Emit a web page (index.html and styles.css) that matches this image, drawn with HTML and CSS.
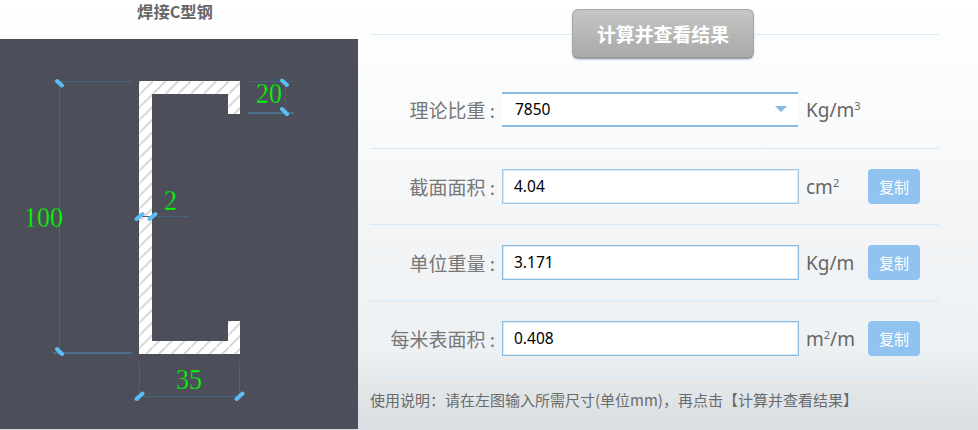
FILE: index.html
```html
<!DOCTYPE html>
<html lang="zh">
<head>
<meta charset="utf-8">
<title>焊接C型钢</title>
<link rel="stylesheet" href="styles.css">
</head>
<body>
<div class="page">
  <section class="figure">
    <h1 class="figure-title">焊接C型钢</h1>
    <div class="canvas">
      <svg class="drawing" width="358" height="390" viewBox="0 39 358 390" xmlns="http://www.w3.org/2000/svg">
        <defs>
          <pattern id="hatch" width="12.67" height="12.67" patternUnits="userSpaceOnUse" x="1" y="5">
            <rect width="12.67" height="12.67" fill="#fff"/>
            <line x1="0" y1="12.67" x2="12.67" y2="0" stroke="#cfcfcf" stroke-width="1.6"/>
          </pattern>
        </defs>
        <path class="steel" d="M139 81H240V114H228V94H152V341H228V321H240V354H139Z" fill="url(#hatch)"/>
        <g class="dim">
          <path d="M59.5 81V353M53 81.5H132M248 81.5H294M285.5 81V113M139 216.5H188M139.5 361V402M239.5 361V402M139 396.5H240"/>
          <path class="dim-thick" d="M53 353H132M248 113H294"/>
        </g>
        <g class="ticks">
          <path d="M57 81L62 85.500M57 349L62 354M282 80.500L287 85M282 109L287 114M136.500 219L142.500 214M149.500 219L155.500 214M136.500 399L142.500 393.500M236.500 399L242.500 393.500"/>
        </g>
        <g class="dim-text">
          <text x="24" y="227" textLength="39" lengthAdjust="spacingAndGlyphs">100</text>
          <text x="256" y="103" textLength="26" lengthAdjust="spacingAndGlyphs">20</text>
          <text x="164" y="210" textLength="13" lengthAdjust="spacingAndGlyphs">2</text>
          <text x="176" y="389" textLength="26" lengthAdjust="spacingAndGlyphs">35</text>
        </g>
      </svg>
    </div>
  </section>
  <section class="results">
    <div class="action">
      <span class="action-rule action-rule-left"></span>
      <button class="calc-btn" type="button">计算并查看结果</button>
      <span class="action-rule action-rule-right"></span>
    </div>
    <div class="row row-first">
      <span class="label">理论比重 :</span>
      <div class="select"><span class="select-value">7850</span><span class="caret"></span></div>
      <span class="unit">Kg/m<sup>3</sup></span>
    </div>
    <div class="row">
      <span class="label">截面面积 :</span>
      <input class="field field-pale" type="text" value="4.04" readonly>
      <span class="unit">cm<sup>2</sup></span>
      <button class="copy-btn" type="button">复制</button>
    </div>
    <div class="row row-thick">
      <span class="label">单位重量 :</span>
      <input class="field" type="text" value="3.171" readonly>
      <span class="unit">Kg/m</span>
      <button class="copy-btn" type="button">复制</button>
    </div>
    <div class="row row-last">
      <span class="label">每米表面积 :</span>
      <input class="field" type="text" value="0.408" readonly>
      <span class="unit">m<sup>2</sup>/m</span>
      <button class="copy-btn" type="button">复制</button>
    </div>
    <p class="note">使用说明：请在左图输入所需尺寸(单位mm)，再点击【计算并查看结果】</p>
  </section>
</div>
</body>
</html>
```
FILE: styles.css
```css
* { box-sizing: border-box; }
html, body { margin: 0; padding: 0; height: 430px; overflow: hidden; }
body {
  font-family: "Noto Sans", "Noto Sans CJK SC", sans-serif;
  background: linear-gradient(180deg, #ffffff 0, #f9fafb 130px, #f2f4f6 230px, #eef1f3 350px, #dfe4e7 400px, #d8dee2 430px);
  color: #666;
}
.page { display: flex; width: 978px; height: 430px; }

.figure { width: 358px; flex: none; }
.figure-title {
  margin: 0;
  height: 39px;
  padding-right: 8px;
  text-align: center;
  font: bold 16.300px/22px "Noto Sans CJK SC", sans-serif;
  color: #666;
}
.canvas { height: 390px; background: #4c4f59; }
.drawing { display: block; }
.dim path { fill: none; stroke: #45637a; stroke-width: 1; }
.dim .dim-thick { stroke: #4a6f88; stroke-width: 2; }
.ticks path { fill: none; stroke: #5cbdf5; stroke-width: 4; stroke-linecap: round; }
.dim-text text {
  font-family: "Liberation Serif", serif;
  font-size: 29px;
  fill: #00ff00;
  stroke: #4c4f59;
  stroke-width: 0.35;
}

.results { width: 569px; margin-left: 12px; flex: none; }
.action { display: flex; align-items: center; height: 50px; margin-top: 9px; }
.action-rule { height: 1px; background: #d9ebf8; flex: 1; }
.action-rule-left { flex: none; width: 202px; }
.calc-btn {
  width: 182px;
  height: 50px;
  flex: none;
  border: 1px solid #a5a5a5;
  border-bottom: 2px solid #9c9c9c;
  border-radius: 6px;
  background: linear-gradient(180deg, #c6c6c6, #a9a9a9);
  box-shadow: 0 1px 2px #c4d6e6;
  color: #fff;
  font: bold 18.900px/24px "Noto Sans CJK SC", sans-serif;
  padding: 0;
}
.row {
  display: flex;
  align-items: center;
  height: 76px;
  border-bottom: 1px solid #d5e9f8;
}
.row-first { height: 90px; padding-top: 12px; }
.row-thick { height: 77px; border-bottom: 2px solid #dcecf8; }
.row-last { height: 76px; padding-bottom: 2px; }
.label {
  width: 125px;
  margin-right: 7px;
  flex: none;
  font: 19px/26px "Noto Sans CJK SC", sans-serif;
  color: #777;
  text-align: right;
  white-space: nowrap;
}
.select {
  width: 296px;
  height: 35px;
  flex: none;
  display: flex;
  align-items: center;
  justify-content: space-between;
  padding: 0 11px 2px 13px;
  background: #fff;
  border-top: 2px solid #8abbe0;
  border-bottom: 2px solid #8abbe0;
  font: 15.500px/20px "Noto Sans", sans-serif;
  color: #000;
}
.caret {
  width: 0;
  height: 0;
  border-left: 6px solid transparent;
  border-right: 6px solid transparent;
  border-top: 6px solid #8ab8dc;
}
.field {
  width: 297px;
  height: 35px;
  flex: none;
  padding: 0 11px 2px;
  background: #fff;
  border: 1px solid #8abbe0;
  box-shadow: inset 0 0 0 1px #dbe9f5;
  border-radius: 0;
  outline: none;
  font: 15.500px/20px "Noto Sans", sans-serif;
  color: #000;
}
.field-pale { border-color: #a3c8e5; }
.unit {
  width: 62px;
  margin-left: 7px;
  flex: none;
  font: 19px/26px "Noto Sans", sans-serif;
  color: #666;
  white-space: nowrap;
}
.select + .unit { margin-left: 8px; }
.unit sup { font-size: 11px; line-height: 0; vertical-align: 7px; }
.copy-btn {
  width: 52px;
  height: 35px;
  flex: none;
  border: 0;
  border-radius: 4px;
  background: #90c3ef;
  color: #fff;
  font: 15px/20px "Noto Sans CJK SC", sans-serif;
  padding: 0;
}
.note {
  margin: 11px 0 0;
  font: 15px/22px "Noto Sans CJK SC", "Noto Sans", sans-serif;
  color: #6b6b6b;
  white-space: nowrap;
}
```
